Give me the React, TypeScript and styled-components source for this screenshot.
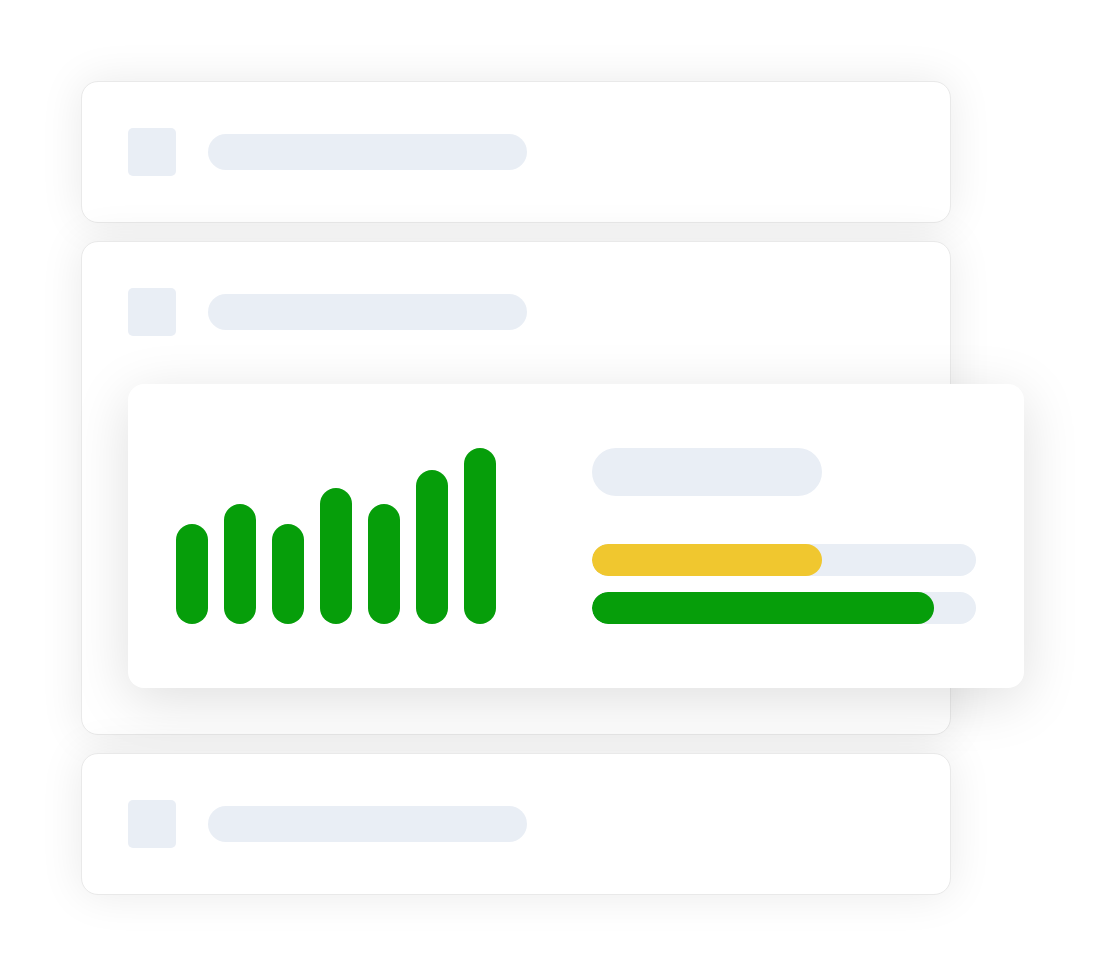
import React from 'react'
import styled, { createGlobalStyle } from 'styled-components'

const GlobalStyle = createGlobalStyle`
  html, body {
    margin: 0;
    padding: 0;
    background: #ffffff;
    font-family: "Inter", "Liberation Sans", sans-serif;
  }
`

const bars = [100, 120, 100, 136, 120, 154, 176]

const progress = [
  { value: 60, color: '#f0c72f' },
  { value: 89, color: '#069e0a' },
]

const App = () => {
  return (
    <Page>
      <GlobalStyle />
      <Stack>
        <Card>
          <Row>
            <Thumb />
            <Line />
          </Row>
        </Card>

        <Card $tall>
          <Row>
            <Thumb />
            <Line />
          </Row>

          <Overlay>
            <Chart>
              {bars.map((h, i) => (
                <Bar key={i} style={{ height: h }} />
              ))}
            </Chart>
            <Side>
              <Title />
              <Meters>
                {progress.map((p, i) => (
                  <Track key={i}>
                    <Fill $color={p.color} style={{ width: `${p.value}%` }} />
                  </Track>
                ))}
              </Meters>
            </Side>
          </Overlay>
        </Card>

        <Card>
          <Row>
            <Thumb />
            <Line />
          </Row>
        </Card>
      </Stack>
    </Page>
  )
}

export default App

const Page = styled.div`
  width: 1103px;
  height: 975px;
  padding: 81px 0 0 81px;
  box-sizing: border-box;
`

const Stack = styled.div`
  display: flex;
  flex-direction: column;
  gap: 18px;
  width: 870px;
`

const Card = styled.div<{ $tall?: boolean }>`
  position: relative;
  box-sizing: border-box;
  height: ${(p) => (p.$tall ? '494px' : '142px')};
  padding: 46px;
  background: #ffffff;
  border: 1px solid #e9e9e9;
  border-radius: 17px;
  box-shadow: 0 0 44px rgba(0, 0, 0, 0.085);
`

const Row = styled.div`
  display: flex;
  align-items: center;
  gap: 32px;
`

const Thumb = styled.div`
  width: 48px;
  height: 48px;
  border-radius: 5px;
  background: #e9eef5;
`

const Line = styled.div`
  width: 319px;
  height: 36px;
  border-radius: 18px;
  background: #e9eef5;
`

const Overlay = styled.div`
  position: absolute;
  left: 46px;
  top: 142px;
  width: 896px;
  height: 304px;
  box-sizing: border-box;
  padding: 64px 48px;
  display: flex;
  justify-content: space-between;
  background: #ffffff;
  border-radius: 16px;
  box-shadow: 0 12px 56px rgba(0, 0, 0, 0.13);
`

const Chart = styled.div`
  display: flex;
  align-items: flex-end;
  gap: 16px;
`

const Bar = styled.div`
  width: 32px;
  border-radius: 16px;
  background: #069e0a;
`

const Side = styled.div`
  width: 384px;
  display: flex;
  flex-direction: column;
  justify-content: space-between;
`

const Title = styled.div`
  width: 230px;
  height: 48px;
  border-radius: 24px;
  background: #e9eef5;
`

const Meters = styled.div`
  display: flex;
  flex-direction: column;
  gap: 16px;
`

const Track = styled.div`
  height: 32px;
  border-radius: 16px;
  background: #e9eef5;
  overflow: hidden;
`

const Fill = styled.div<{ $color: string }>`
  height: 100%;
  border-radius: 16px;
  background: ${(p) => p.$color};
`
